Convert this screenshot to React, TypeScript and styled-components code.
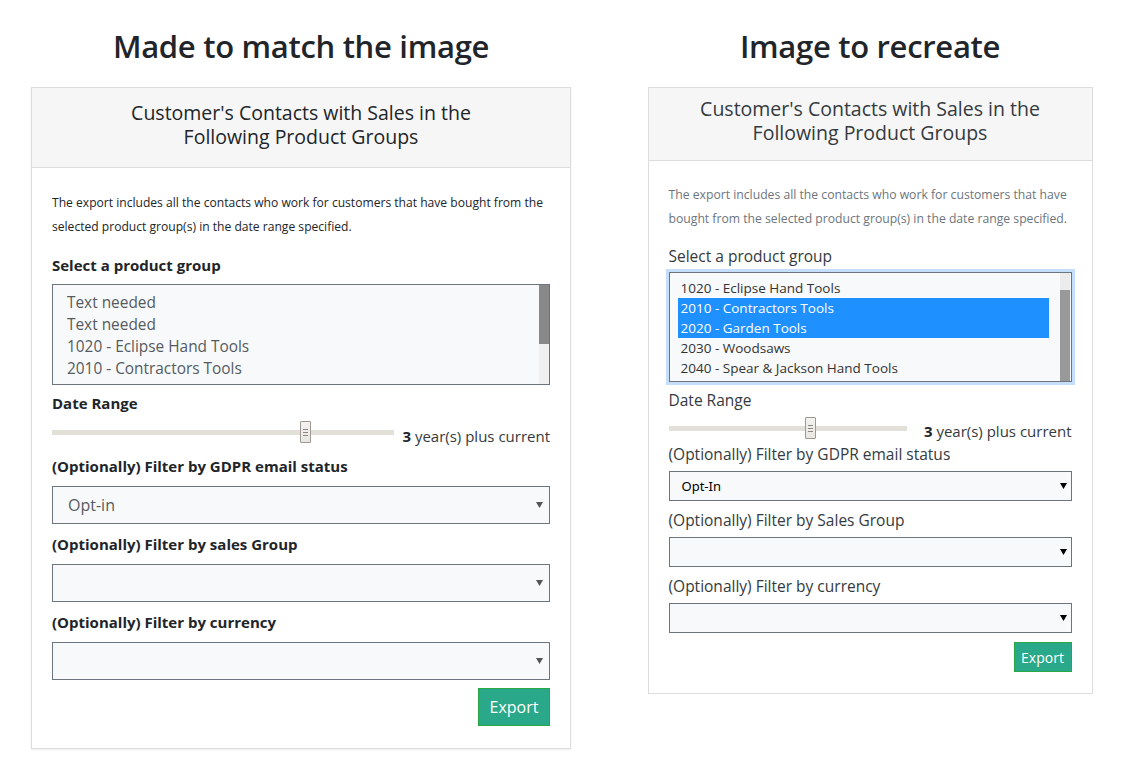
import React from "react";
import styled, { createGlobalStyle, css } from "styled-components";

const FONT = `"Open Sans", "Noto Sans", "Liberation Sans", sans-serif`;

const Global = createGlobalStyle`
  html, body { margin: 0; padding: 0; background: #ffffff; }
  body {
    font-family: ${FONT};
    color: #212529;
    width: 1138px;
    height: 783px;
    overflow: hidden;
  }
  *, *::before, *::after { box-sizing: border-box; }
`;

type Variant = "draft" | "target";

const Page = styled.main`
  display: grid;
  grid-template-columns: 602px 1fr;
  padding-top: 27px;
`;

const Column = styled.section`
  display: flex;
  flex-direction: column;
  align-items: center;
`;

const PageTitle = styled.h1`
  margin: 0 0 22px;
  font-size: 31px;
  font-weight: 550;
  letter-spacing: -0.3px;
  line-height: 38px;
  color: #212529;
  white-space: nowrap;
`;

const Card = styled.div<{ $v: Variant }>`
  width: ${(p) => (p.$v === "draft" ? 540 : 445)}px;
  background: #fff;
  border: 1px solid #dddddd;
  ${(p) =>
    p.$v === "draft" &&
    css`
      box-shadow: 0 1px 2px rgba(0, 0, 0, 0.08);
    `}
`;

const CardHeader = styled.header<{ $v: Variant }>`
  background: #f6f6f7;
  border-bottom: 1px solid #dddddd;
  text-align: center;
  padding: ${(p) => (p.$v === "draft" ? "13px 0 18px" : "9px 0 15px")};
`;

const CardTitle = styled.h2<{ $v: Variant }>`
  margin: 0;
  font-size: 19.5px;
  line-height: 24px;
  font-weight: 400;
  white-space: nowrap;
  color: ${(p) => (p.$v === "draft" ? "#212529" : "#343a40")};
`;

const CardBody = styled.div<{ $v: Variant }>`
  display: flex;
  flex-direction: column;
  padding: ${(p) => (p.$v === "draft" ? "23px 20px 22px 20px" : "22px 20px 21px 20px")};
`;

const Description = styled.p<{ $v: Variant }>`
  margin: 0;
  font-size: ${(p) => (p.$v === "draft" ? 12.1 : 12.2)}px;
  line-height: 24px;
  white-space: nowrap;
  color: ${(p) => (p.$v === "draft" ? "#212529" : "#6c757d")};
`;

const Label = styled.div<{ $v: Variant; $gap: number; $after: number }>`
  margin-top: ${(p) => p.$gap}px;
  margin-bottom: ${(p) => p.$after}px;
  font-size: ${(p) => (p.$v === "draft" ? 15 : 15.5)}px;
  line-height: 22px;
  white-space: nowrap;
  font-weight: ${(p) => (p.$v === "draft" ? 700 : 450)};
  color: ${(p) => (p.$v === "draft" ? "#212529" : "#343a40")};
`;

const ListBox = styled.div<{ $v: Variant }>`
  display: flex;
  flex-shrink: 0;
  height: ${(p) => (p.$v === "draft" ? 101 : 110)}px;
  background: #f8f9fa;
  border: 1px solid #6c757d;
  overflow: hidden;
  ${(p) =>
    p.$v === "target" &&
    css`
      box-shadow: 0 0 0 3px #c4defc;
      padding-right: 1px;
    `}
`;

const Options = styled.div<{ $v: Variant }>`
  flex: 1;
  overflow: hidden;
  padding: ${(p) => (p.$v === "draft" ? "7px 12px 0 14px" : "5px 11px 0 8px")};
`;

const Option = styled.div<{ $v: Variant; $selected?: boolean }>`
  white-space: nowrap;
  font-size: ${(p) => (p.$v === "draft" ? 15.4 : 13.5)}px;
  line-height: ${(p) => (p.$v === "draft" ? 22 : 20)}px;
  padding-left: ${(p) => (p.$v === "draft" ? 0 : 3)}px;
  color: ${(p) => (p.$v === "draft" ? "#555b61" : "#333333")};
  ${(p) =>
    p.$selected &&
    css`
      background: #1e90ff;
      color: #ffffff;
    `}
`;

const ScrollTrack = styled.div<{ $v: Variant }>`
  width: 10px;
  flex-shrink: 0;
  display: flex;
  flex-direction: column;
  justify-content: ${(p) => (p.$v === "draft" ? "flex-start" : "flex-end")};
  background: ${(p) => (p.$v === "draft" ? "#f0f0f0" : "#ececec")};
`;

const ScrollThumb = styled.div<{ $v: Variant; $h: number }>`
  height: ${(p) => p.$h}px;
  background: ${(p) => (p.$v === "draft" ? "#888888" : "#999999")};
`;

const SliderRow = styled.div<{ $v: Variant }>`
  display: flex;
  align-items: center;
  gap: ${(p) => (p.$v === "draft" ? 8 : 16)}px;
  height: 22px;
  flex-shrink: 0;
`;

const Track = styled.div<{ $v: Variant }>`
  position: relative;
  flex-shrink: 0;
  width: ${(p) => (p.$v === "draft" ? 342 : 238)}px;
  height: 5px;
  background: #e3dfd9;
`;

const Thumb = styled.div`
  position: absolute;
  top: 50%;
  width: 11px;
  height: 22px;
  margin-top: -11px;
  background: linear-gradient(#f4f2f0, #e9e6e3);
  border: 1px solid #9f9993;
  border-radius: 1px;
  display: flex;
  align-items: center;
  justify-content: center;
`;

const SliderValue = styled.div<{ $v: Variant }>`
  flex: 1;
  text-align: right;
  font-size: 15px;
  line-height: 22px;
  margin-top: ${(p) => (p.$v === "draft" ? 7 : 5)}px;
  white-space: nowrap;
  color: #343a40;
  b { font-weight: 700; color: #212529; }
`;

const Select = styled.div<{ $v: Variant; $after: number }>`
  display: flex;
  flex-shrink: 0;
  align-items: center;
  justify-content: space-between;
  height: ${(p) => (p.$v === "draft" ? 38 : 30)}px;
  margin-bottom: ${(p) => p.$after}px;
  background: #f8f9fa;
  border: 1px solid #6c757d;
  padding: ${(p) => (p.$v === "draft" ? "0 6px 0 15px" : "0 4px 0 12px")};
  font-size: ${(p) => (p.$v === "draft" ? 16 : 13)}px;
  color: ${(p) => (p.$v === "draft" ? "#555b61" : "#000000")};
  font-family: ${(p) => (p.$v === "draft" ? FONT : `"Noto Sans", ${FONT}`)};
`;

const ExportButton = styled.button<{ $v: Variant }>`
  align-self: flex-end;
  flex-shrink: 0;
  height: ${(p) => (p.$v === "draft" ? 38 : 30)}px;
  width: ${(p) => (p.$v === "draft" ? 72 : 58)}px;
  padding: 0;
  background: #29a88a;
  border: 1px solid #28a745;
  color: #ffffff;
  font-family: ${FONT};
  font-size: ${(p) => (p.$v === "draft" ? 16 : 14)}px;
`;

const Arrow = ({ color }: { color: string }) => (
  <svg width="7" height="6" viewBox="0 0 7 6">
    <path d="M0 0 H7 L3.5 6 Z" fill={color} />
  </svg>
);

const ThumbGrip = () => (
  <svg width="5" height="7" viewBox="0 0 5 7">
    <path d="M0 0.5 H5 M0 3.5 H5 M0 6.5 H5" stroke="#8c8782" strokeWidth="1" />
  </svg>
);

const draftOptions = [
  "Text needed",
  "Text needed",
  "1020 - Eclipse Hand Tools",
  "2010 - Contractors Tools",
  "2020 - Garden Tools",
];

const targetOptions = [
  { label: "1020 - Eclipse Hand Tools" },
  { label: "2010 - Contractors Tools", selected: true },
  { label: "2020 - Garden Tools", selected: true },
  { label: "2030 - Woodsaws" },
  { label: "2040 - Spear & Jackson Hand Tools" },
];

function DraftPanel() {
  const v: Variant = "draft";
  return (
    <Card $v={v}>
      <CardHeader $v={v}>
        <CardTitle $v={v}>
          Customer's Contacts with Sales in the
          <br />
          Following Product Groups
        </CardTitle>
      </CardHeader>
      <CardBody $v={v}>
        <Description $v={v}>
          The export includes all the contacts who work for customers that have bought from the
          <br />
          selected product group(s) in the date range specified.
        </Description>
        <Label $v={v} $gap={15} $after={8}>
          Select a product group
        </Label>
        <ListBox $v={v}>
          <Options $v={v}>
            {draftOptions.map((o, i) => (
              <Option $v={v} key={i}>
                {o}
              </Option>
            ))}
          </Options>
          <ScrollTrack $v={v}>
            <ScrollThumb $v={v} $h={59} />
          </ScrollTrack>
        </ListBox>
        <Label $v={v} $gap={7} $after={7}>
          Date Range
        </Label>
        <SliderRow $v={v}>
          <Track $v={v}>
            <Thumb style={{ left: `${(248 / 342) * 100}%` }}>
              <ThumbGrip />
            </Thumb>
          </Track>
          <SliderValue $v={v}>
            <b>3</b> year(s) plus current
          </SliderValue>
        </SliderRow>
        <Label $v={v} $gap={12} $after={9}>
          (Optionally) Filter by GDPR email status
        </Label>
        <Select $v={v} $after={9}>
          <span>Opt-in</span>
          <Arrow color="#555" />
        </Select>
        <Label $v={v} $gap={0} $after={9}>
          (Optionally) Filter by sales Group
        </Label>
        <Select $v={v} $after={9}>
          <span />
          <Arrow color="#555" />
        </Select>
        <Label $v={v} $gap={0} $after={9}>
          (Optionally) Filter by currency
        </Label>
        <Select $v={v} $after={8}>
          <span />
          <Arrow color="#555" />
        </Select>
        <ExportButton $v={v}>Export</ExportButton>
      </CardBody>
    </Card>
  );
}

function TargetPanel() {
  const v: Variant = "target";
  return (
    <Card $v={v}>
      <CardHeader $v={v}>
        <CardTitle $v={v}>
          Customer's Contacts with Sales in the
          <br />
          Following Product Groups
        </CardTitle>
      </CardHeader>
      <CardBody $v={v}>
        <Description $v={v}>
          The export includes all the contacts who work for customers that have
          <br />
          bought from the selected product group(s) in the date range specified.
        </Description>
        <Label $v={v} $gap={14} $after={5}>
          Select a product group
        </Label>
        <ListBox $v={v}>
          <Options $v={v}>
            {targetOptions.map((o, i) => (
              <Option $v={v} $selected={o.selected} key={i}>
                {o.label}
              </Option>
            ))}
          </Options>
          <ScrollTrack $v={v}>
            <ScrollThumb $v={v} $h={91} />
          </ScrollTrack>
        </ListBox>
        <Label $v={v} $gap={7} $after={6}>
          Date Range
        </Label>
        <SliderRow $v={v}>
          <Track $v={v}>
            <Thumb style={{ left: `${(136 / 238) * 100}%` }}>
              <ThumbGrip />
            </Thumb>
          </Track>
          <SliderValue $v={v}>
            <b>3</b> year(s) plus current
          </SliderValue>
        </SliderRow>
        <Label $v={v} $gap={4} $after={6}>
          (Optionally) Filter by GDPR email status
        </Label>
        <Select $v={v} $after={8}>
          <span>Opt-In</span>
          <Arrow color="#000" />
        </Select>
        <Label $v={v} $gap={0} $after={6}>
          (Optionally) Filter by Sales Group
        </Label>
        <Select $v={v} $after={8}>
          <span />
          <Arrow color="#000" />
        </Select>
        <Label $v={v} $gap={0} $after={6}>
          (Optionally) Filter by currency
        </Label>
        <Select $v={v} $after={9}>
          <span />
          <Arrow color="#000" />
        </Select>
        <ExportButton $v={v}>Export</ExportButton>
      </CardBody>
    </Card>
  );
}

export default function App() {
  return (
    <>
      <Global />
      <Page>
        <Column>
          <PageTitle>Made to match the image</PageTitle>
          <DraftPanel />
        </Column>
        <Column>
          <PageTitle>Image to recreate</PageTitle>
          <TargetPanel />
        </Column>
      </Page>
    </>
  );
}
